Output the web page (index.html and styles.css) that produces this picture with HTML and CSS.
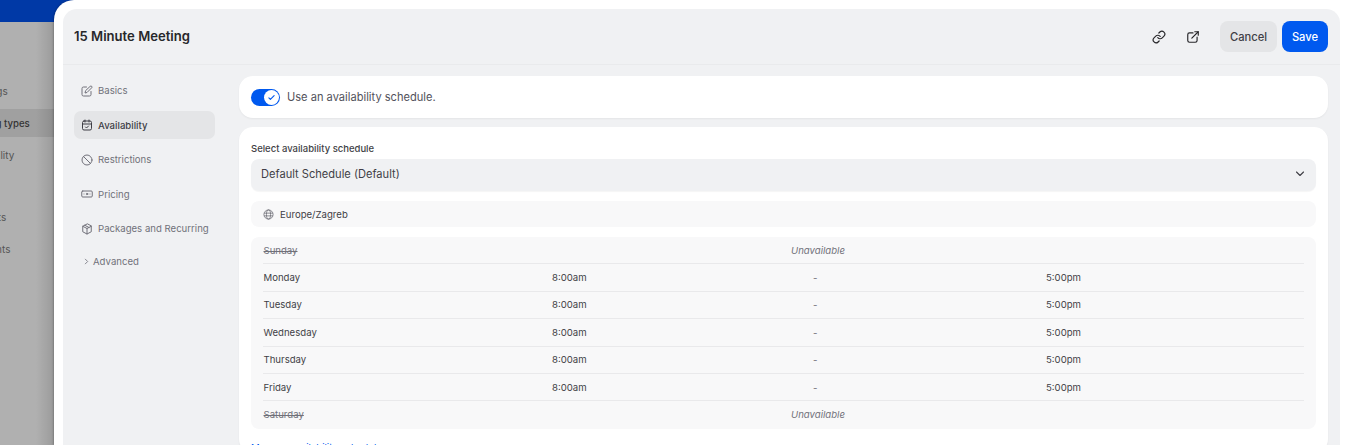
FILE: index.html
```html
<!DOCTYPE html>
<html lang="en">
<head>
<meta charset="utf-8">
<title>15 Minute Meeting</title>
<link rel="stylesheet" href="styles.css">
</head>
<body>
<div class="page">
  <aside class="backdrop">
    <div class="topbar"></div>
    <nav class="bg-nav">
      <div class="bg-item">Bookings</div>
      <div class="bg-item bg-active">Meeting types</div>
      <div class="bg-item">Availability</div>
      <div class="bg-item bg-gap">Contacts</div>
      <div class="bg-item">Payments</div>
    </nav>
  </aside>
  <main class="dialog">
    <div class="panel">
      <header class="head">
        <h1 class="title">15 Minute Meeting</h1>
        <div class="actions">
          <svg class="act-icon link-icon" viewBox="0 0 24 24" fill="none" stroke="currentColor" stroke-width="2" stroke-linecap="round" stroke-linejoin="round"><path d="M10 13a5 5 0 0 0 7.54.54l3-3a5 5 0 0 0-7.07-7.07l-1.72 1.71"/><path d="M14 11a5 5 0 0 0-7.54-.54l-3 3a5 5 0 0 0 7.07 7.07l1.71-1.71"/></svg>
          <svg class="act-icon ext-icon" viewBox="0 0 24 24" fill="none" stroke="currentColor" stroke-width="2" stroke-linecap="round" stroke-linejoin="round"><path d="M12 5H6a3 3 0 0 0-3 3v10a3 3 0 0 0 3 3h10a3 3 0 0 0 3-3v-6"/><path d="M10 14 21 3"/><path d="M15 3h6v6"/></svg>
          <button class="btn btn-cancel">Cancel</button>
          <button class="btn btn-save">Save</button>
        </div>
      </header>
      <div class="body">
        <nav class="side">
          <a class="side-item"><svg class="side-icon" viewBox="0 0 24 24" fill="none" stroke="currentColor" stroke-width="2" stroke-linecap="round" stroke-linejoin="round"><path d="M11 4H5a3 3 0 0 0-3 3v12a3 3 0 0 0 3 3h12a3 3 0 0 0 3-3v-6"/><path d="M18.4 2.6a2.1 2.1 0 0 1 3 3L12 15l-4 1 1-4z"/></svg>Basics</a>
          <a class="side-item side-active"><svg class="side-icon" viewBox="0 0 24 24" fill="none" stroke="currentColor" stroke-width="2" stroke-linecap="round" stroke-linejoin="round"><rect x="3" y="4" width="18" height="18" rx="3"/><path d="M16 2v4M8 2v4M3 10h18"/><path d="m9 16 2 2 4-4"/></svg>Availability</a>
          <a class="side-item"><svg class="side-icon" viewBox="0 0 24 24" fill="none" stroke="currentColor" stroke-width="2" stroke-linecap="round"><circle cx="12" cy="12" r="10"/><path d="m5 5 14 14"/></svg>Restrictions</a>
          <a class="side-item"><svg class="side-icon" viewBox="0 0 24 24" fill="none" stroke="currentColor" stroke-width="2" stroke-linecap="round"><rect x="1.5" y="6" width="21" height="12" rx="2"/><circle cx="12" cy="12" r="1.5"/><path d="M6 12h.01M18 12h.01"/></svg>Pricing</a>
          <a class="side-item"><svg class="side-icon" viewBox="0 0 24 24" fill="none" stroke="currentColor" stroke-width="2" stroke-linecap="round" stroke-linejoin="round"><path d="M12 2 3.5 6.5v11L12 22l8.5-4.500v-11z"/><path d="M3.500 6.500 12 11l8.500-4.500M12 11v11"/><path d="M7.500 4.500 16 9"/></svg>Packages and Recurring</a>
          <a class="side-adv"><svg class="adv-icon" viewBox="0 0 24 24" fill="none" stroke="currentColor" stroke-width="2.800" stroke-linecap="round" stroke-linejoin="round"><path d="m8 4 8 8-8 8"/></svg>Advanced</a>
        </nav>
        <section class="content">
          <div class="card toggle-card">
            <span class="toggle"><span class="knob"><svg viewBox="0 0 24 24" fill="none" stroke="currentColor" stroke-width="3" stroke-linecap="round" stroke-linejoin="round"><path d="m5 13 4 4 10-10"/></svg></span></span>
            <span class="toggle-text">Use an availability schedule.</span>
          </div>
          <div class="card sched-card">
            <div class="field-label">Select availability schedule</div>
            <div class="select">Default Schedule (Default)<svg class="chev" viewBox="0 0 24 24" fill="none" stroke="currentColor" stroke-width="2.200" stroke-linecap="round" stroke-linejoin="round"><path d="m5 8 7 7 7-7"/></svg></div>
            <div class="tz"><svg class="globe" viewBox="0 0 24 24" fill="none" stroke="currentColor" stroke-width="1.800"><circle cx="12" cy="12" r="10"/><ellipse cx="12" cy="12" rx="4.500" ry="10"/><path d="M2.500 9h19M2.500 15h19"/></svg>Europe/Zagreb</div>
            <div class="hours">
              <div class="row off"><span class="day">Sunday</span><span class="unavail">Unavailable</span></div>
              <div class="row"><span class="day">Monday</span><span class="start">8:00am</span><span class="dash">-</span><span class="end">5:00pm</span></div>
              <div class="row"><span class="day">Tuesday</span><span class="start">8:00am</span><span class="dash">-</span><span class="end">5:00pm</span></div>
              <div class="row"><span class="day">Wednesday</span><span class="start">8:00am</span><span class="dash">-</span><span class="end">5:00pm</span></div>
              <div class="row"><span class="day">Thursday</span><span class="start">8:00am</span><span class="dash">-</span><span class="end">5:00pm</span></div>
              <div class="row"><span class="day">Friday</span><span class="start">8:00am</span><span class="dash">-</span><span class="end">5:00pm</span></div>
              <div class="row off"><span class="day">Saturday</span><span class="unavail">Unavailable</span></div>
            </div>
            <a class="manage">Manage availability schedules</a>
          </div>
        </section>
      </div>
    </div>
  </main>
</div>
</body>
</html>
```
FILE: styles.css
```css
* { box-sizing: border-box; }
html, body { margin: 0; height: 445px; overflow: hidden; }
body { font-family: Inter, "Liberation Sans", sans-serif; background: #fff; color: #27272a; }
.page { display: flex; height: 445px; overflow: hidden; background: #b0b0b0; }
.backdrop { position: relative; width: 74px; margin-right: -20px; flex: none; overflow: hidden; }
.backdrop::after { content: ""; position: absolute; top: 22px; bottom: 0; left: 36px; width: 18px; background: linear-gradient(90deg, rgba(0,0,0,0), rgba(0,0,0,.12)); }
.topbar { height: 22px; background: #0039a6; }
.bg-nav { display: flex; flex-direction: column; width: 54px; margin-top: 53px; font-size: 10px; color: #555; }
.bg-item { height: 32px; display: flex; align-items: center; white-space: nowrap; text-indent: -36px; }
.bg-item.bg-active { background: #a0a0a0; font-size: 9.6px; font-weight: 500; color: #333; height: 28px; margin: 2px 0; text-indent: -36px; }
.bg-gap { margin-top: 30px; }
.dialog { position: relative; flex: 1; min-width: 0; background: #fff; border-radius: 20px 0 0 0; padding: 9px 20px 0 9px; box-shadow: -1px 0 2px rgba(0,0,0,.2); }
.panel { height: 100%; background: #f0f1f3; border-radius: 14px 14px 0 0; overflow: hidden; }
.head { height: 56px; display: flex; align-items: center; justify-content: space-between; padding: 0 12px 0 11px; border-bottom: 1px solid #e9eaec; }
.title { margin: 0 0 2px; font-size: 13.1px; font-weight: 600; color: #27272a; }
.actions { display: flex; align-items: center; }
.act-icon { width: 14px; height: 14px; color: #27272a; }
.link-icon { margin-right: 20px; }
.ext-icon { margin-right: 20px; }
.btn { height: 31px; border: 0; border-radius: 8px; font: 500 11.2px Inter, "Liberation Sans", sans-serif; padding: 0; }
.btn-cancel { width: 57px; background: #e4e5e7; color: #3f3f46; margin-right: 5px; }
.btn-save { width: 46px; background: #0059ef; color: #fff; }
.body { display: flex; padding-top: 11px; }
.side { width: 176px; flex: none; padding: 0.75px 0 0 11px; display: flex; flex-direction: column; }
.side-item { height: 28px; width: 141px; margin-top: 6.5px; padding-left: 6.5px; display: flex; align-items: center; gap: 5.5px; font-size: 9.6px; color: #71717a; border-radius: 7px; white-space: nowrap; }
.side-item:first-child { margin-top: 0; }
.side-active { background: #e4e5e7; color: #3f3f46; font-weight: 500; }
.side-icon { width: 12px; height: 12px; flex: none; }
.side-adv { display: flex; align-items: center; gap: 3px; margin-top: 5px; height: 28px; padding-left: 9px; font-size: 9.6px; color: #71717a; }
.adv-icon { width: 7px; height: 7px; }
.content { flex: 1; min-width: 0; display: flex; flex-direction: column; gap: 9px; padding-right: 12px; }
.card { background: #fff; border-radius: 14px; box-shadow: 0 1px 2px rgba(0,0,0,.05); }
.toggle-card { height: 42px; display: flex; align-items: center; gap: 7px; padding-left: 12px; }
.toggle { width: 29px; height: 17px; border-radius: 9px; background: #0059ef; display: flex; justify-content: flex-end; align-items: center; padding-right: 1px; flex: none; }
.knob { width: 15px; height: 15px; border-radius: 50%; background: #fff; color: #0059ef; display: flex; align-items: center; justify-content: center; }
.knob svg { width: 9px; height: 9px; }
.toggle-text { font-size: 11.1px; color: #52525b; }
.sched-card { padding: 15px 12px 0; flex: 1; }
.field-label { font-size: 9.5px; font-weight: 500; color: #3f3f46; height: 12px; line-height: 13px; margin-bottom: 5px; }
.select { height: 31.5px; background: #f0f1f3; border-radius: 8px; display: flex; align-items: center; justify-content: space-between; padding: 0 10px 1px; font-size: 11.1px; color: #3f3f46; box-shadow: 0 1px 1px rgba(0,0,0,.04); }
.chev { width: 12px; height: 12px; color: #3f3f46; }
.tz { height: 26.3px; margin-top: 10.5px; background: #f8f8f9; border-radius: 8px; display: flex; align-items: center; gap: 6px; padding-left: 12px; font-size: 9.6px; color: #3f3f46; }
.globe { width: 11px; height: 11px; color: #71717a; }
.hours { margin-top: 9.7px; background: #f8f8f9; border-radius: 8px; padding: 0 12px; }
.row { height: 27.4px; display: grid; grid-template-columns: 289px 239px 22px 233px 1fr; align-items: center; font-size: 9.6px; color: #3f3f46; border-bottom: 1px solid #e9e9eb; }
.row:last-child { border-bottom-color: transparent; }
.day { grid-column: 1; padding-left: .5px; }
.start { grid-column: 2; }
.dash { grid-column: 3 / span 2; padding-left: 22px; color: #71717a; }
.end { grid-column: 5; }
.off .day { color: #71717a; text-decoration: line-through; }
.unavail { grid-column: 3 / span 2; font-style: italic; color: #71717a; }
.manage { display: block; margin-top: 13px; font-size: 9.6px; color: #0059ef; }
```
